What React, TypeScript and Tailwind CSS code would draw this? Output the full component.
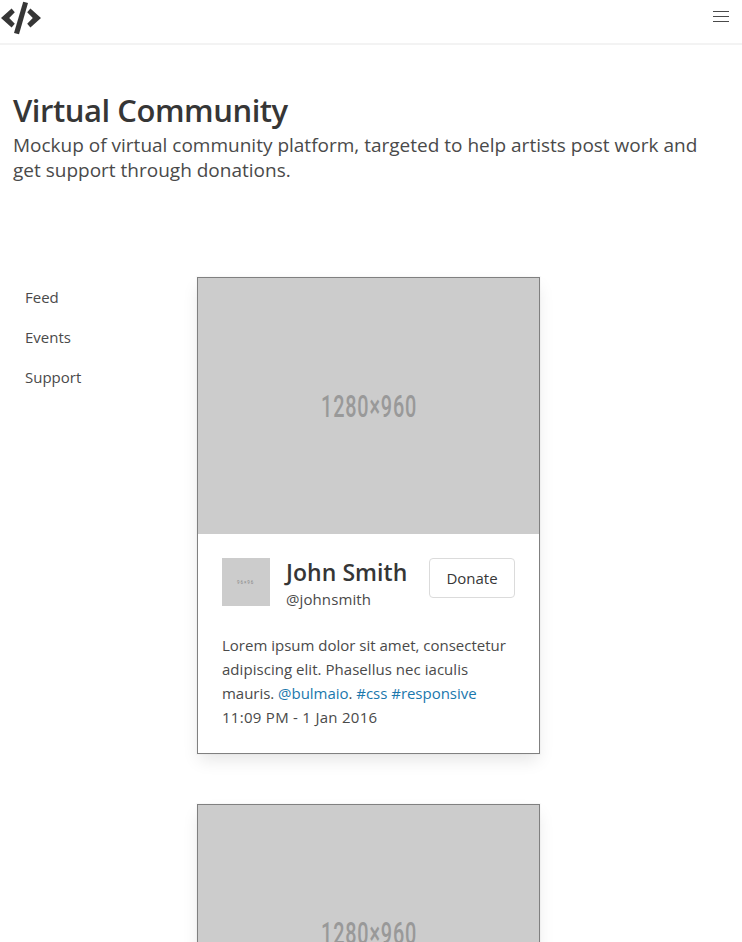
import type { ReactNode } from "react";

const navigation = ["Feed", "Events", "Support"];

function Logo() {
  return (
    <svg width="42" height="36" viewBox="0 0 42 36" fill="#363636" aria-label="Code">
      <path d="M1 18 11.6 8.5 14.8 12.2 9.2 18 14.8 23.8 11.6 27.6Z" />
      <path d="M23.2 1.8 28 3 19 34.3 14 33Z" />
      <path d="M41 18 30.4 8.5 27.2 12.2 32.8 18 27.2 23.8 30.4 27.6Z" />
    </svg>
  );
}

function Line({ children, className }: { children: ReactNode; className: string }) {
  return <span className={`block whitespace-nowrap ${className}`}>{children}</span>;
}

function PostCard() {
  return (
    <article className="h-[477px] w-[343px] shrink-0 border border-[#808080] bg-white shadow-[0_8px_16px_-2px_rgba(10,10,10,0.1),0_0_0_1px_rgba(10,10,10,0.02)]">
      <div className="flex h-[256px] items-center justify-center bg-[#ccc] pl-[2px]">
        <span className="mt-px inline-block scale-x-[0.64] font-[Roboto,sans-serif] text-[31px] leading-none font-medium tracking-[1.3px] text-[#999]">
          1280×960
        </span>
      </div>
      <div className="p-6">
        <div className="flex h-12">
          <div className="flex size-12 shrink-0 items-center justify-center bg-[#ccc]">
            <span className="scale-x-75 font-[Roboto,sans-serif] text-[6px] leading-none tracking-[1.3px] text-[#888]">96×96</span>
          </div>
          <div className="ml-4 w-[143px] shrink-0">
            <h2 className="pt-px text-[23px] leading-[27px] font-semibold tracking-[0.05px] whitespace-nowrap text-[#363636]">John Smith</h2>
            <p className="mt-px text-[15px] leading-6 tracking-[0.1px] whitespace-nowrap">@johnsmith</p>
          </div>
          <button className="h-10 w-[86px] shrink-0 rounded border border-[#dbdbdb] text-[15px] text-[#363636]">Donate</button>
        </div>
        <div className="mt-[27px] text-[15px] leading-6">
          <Line className="">Lorem ipsum dolor sit amet, consectetur</Line>
          <Line className="tracking-[0.04px]">adipiscing elit. Phasellus nec iaculis</Line>
          <Line className="tracking-[-0.03px]">
            mauris. <a className="text-[#1b78ad]">@bulmaio</a>. <a className="text-[#1b78ad]">#css</a>{" "}
            <a className="text-[#1b78ad]">#responsive</a>
          </Line>
          <Line className="tracking-[0.28px]">11:09 PM - 1 Jan 2016</Line>
        </div>
      </div>
    </article>
  );
}

export default function App() {
  return (
    <div className="h-[942px] overflow-hidden bg-white font-['Open_Sans',sans-serif] text-[#4a4a4a]">
      <header className="flex h-[45px] justify-between border-b-2 border-[#f3f3f3]">
        <Logo />
        <button aria-label="Menu" className="mt-[11px] mr-[13px] flex h-[11px] w-4 flex-col justify-between">
          <span className="h-px w-4 bg-[#4a4a4a]" />
          <span className="h-px w-4 bg-[#4a4a4a]" />
          <span className="h-px w-4 bg-[#4a4a4a]" />
        </button>
      </header>
      <section className="h-[232px] px-[13px] pt-[47px]">
        <h1 className="text-[31px] leading-9 font-semibold tracking-[-0.46px] whitespace-nowrap text-[#363636]">Virtual Community</h1>
        <p className="mt-[5px] text-[19px] leading-[25px]">
          <Line className="">Mockup of virtual community platform, targeted to help artists post work and</Line>
          <Line className="">get support through donations.</Line>
        </p>
      </section>
      <main className="flex">
        <nav className="w-[197px] shrink-0 pl-[25px] text-[15px]">
          {navigation.map((item) => (
            <a key={item} className="flex h-10 items-center">{item}</a>
          ))}
        </nav>
        <div className="flex flex-col gap-[50px]">
          <PostCard />
          <PostCard />
        </div>
      </main>
    </div>
  );
}
